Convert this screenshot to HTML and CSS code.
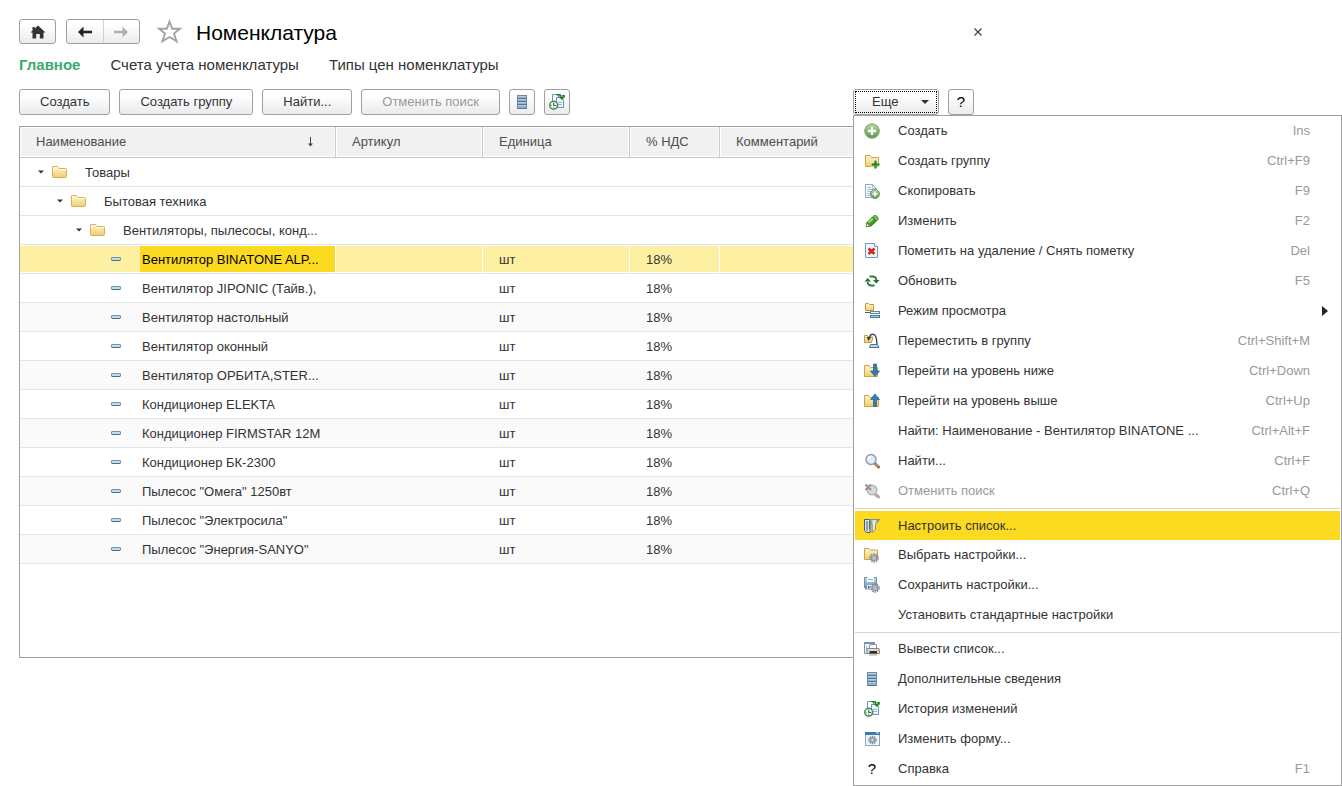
FILE: index.html
```html
<!DOCTYPE html>
<html lang="ru">
<head>
<meta charset="utf-8">
<title>Номенклатура</title>
<link rel="stylesheet" href="styles.css">
</head>
<body>
<svg class="sprite" aria-hidden="true">
  <defs>
    <linearGradient id="g-folder" x1="0" y1="0" x2="0" y2="1"><stop offset="0" stop-color="#fdf6cf"/><stop offset="1" stop-color="#efcf6c"/></linearGradient>
    <linearGradient id="g-green" x1="0" y1="0" x2="0" y2="1"><stop offset="0" stop-color="#b4dba0"/><stop offset="1" stop-color="#559b49"/></linearGradient>
    <linearGradient id="g-blue" x1="0" y1="0" x2="0" y2="1"><stop offset="0" stop-color="#c9dce9"/><stop offset="1" stop-color="#5f8cad"/></linearGradient>
    <linearGradient id="g-metal" x1="0" y1="0" x2="1" y2="0"><stop offset="0" stop-color="#5c6670"/><stop offset=".5" stop-color="#f4f6f8"/><stop offset="1" stop-color="#56616b"/></linearGradient>
  </defs>
  <symbol id="i-folder" viewBox="0 0 16 16"><path d="M.5 12.500V3Q.5 2.500 1 2.500H5.500L7 4.500H13.500Q14.500 4.500 14.500 5.500V12.500Q14.500 13.500 13.500 13.500H1.500Q.5 13.500 .5 12.500Z" fill="url(#g-folder)" stroke="#d8ad5c"/><path d="M1.500 7V3.500H5L6.500 5.500H13.500" fill="none" stroke="#fffbe6"/></symbol>
  <symbol id="i-item" viewBox="0 0 16 16"><rect x="2.500" y="6.500" width="9" height="3" rx=".5" fill="#c4dcea" stroke="#6f95b0"/><path d="M3 9.500H11" stroke="#4b708c"/></symbol>
  <symbol id="i-add" viewBox="0 0 16 16"><circle cx="8" cy="8" r="7.300" fill="url(#g-green)" stroke="#8a9c85"/><path d="M8 4V12M4 8H12" stroke="#fff" stroke-width="2.400"/></symbol>
  <symbol id="i-gear" viewBox="0 0 10 10"><circle cx="5" cy="5" r="3.900" fill="none" stroke="#858a92" stroke-width="1.800" stroke-dasharray="1.500 .95"/><circle cx="5" cy="5" r="2.600" fill="#d7dade" stroke="#9297a0" stroke-width="1.400"/><circle cx="5" cy="5" r="1.100" fill="#fff" stroke="#7a8088" stroke-width=".6"/></symbol>
  <symbol id="i-addfolder" viewBox="0 0 16 16"><path d="M1.500 13V2.500H6L7.500 4.500H14.500V13.500H1.500Z" fill="url(#g-folder)" stroke="#d0a04c"/><path d="M11.500 7V16M7 11.500H16" stroke="#fff" stroke-width="3.600"/><path d="M11.500 7.500V15.500M7.500 11.500H15.500" stroke="#2f8c1e" stroke-width="2.400"/></symbol>
  <symbol id="i-copy" viewBox="0 0 16 16"><path d="M1.500 1.500H8.500L12.500 5.500V14.500H1.500Z" fill="#f4f8fc" stroke="#91a8c2"/><path d="M8.500 1.500V5.500H12.500M3.500 4.500H7M3.500 6.500H10M3.500 8.500H10M3.500 10.500H7M3.500 12.500H6" fill="none" stroke="#a3bbd5"/><circle cx="11" cy="11" r="4.500" fill="url(#g-green)" stroke="#78906e"/><path d="M11 8.500V13.500M8.500 11H13.500" stroke="#fff" stroke-width="1.600"/></symbol>
  <symbol id="i-edit" viewBox="0 0 16 16"><path d="M2.500 13.500L3 9.500L8.500 4L12.500 8L7 13Z" fill="#3fa01d" stroke="#286d14"/><path d="M4.500 9.500L9 5.500" stroke="#9bdc76" stroke-width="1.800"/><path d="M8.500 4L10.500 2.500H12L14 4.500V6.500L12.500 8Z" fill="#79bd55" stroke="#286d14" stroke-width=".8"/><path d="M2 14L3 10L6 13Z" fill="#f1e3bd" stroke="#51604a" stroke-width=".6"/></symbol>
  <symbol id="i-delete" viewBox="0 0 16 16"><path d="M1.500 .5H10.500L13.500 3.500V14.500H1.500Z" fill="#f0f6fc" stroke="#7898b9"/><path d="M10.500 .5V3.500H13.500" fill="#fff" stroke="#7898b9"/><path d="M4.500 5.500L10.500 11M10.500 5.500L4.500 11" stroke="#d2231a" stroke-width="2.500"/></symbol>
  <symbol id="i-refresh" viewBox="0 0 16 16"><path d="M5.500 3.500H8.500Q12 3.500 12.500 7M10.500 12.500H7.500Q4 12.500 3.500 9" fill="none" stroke="#24803a" stroke-width="1.800"/><path d="M9 7H15.500L12.300 10.500ZM.5 8.500H7L3.700 5Z" fill="#24702f"/></symbol>
  <symbol id="i-view" viewBox="0 0 16 16"><path d="M1.500 7.500V.5H4.500L5.500 1.500H9.500V7.500Z" fill="url(#g-folder)" stroke="#c79a3b"/><path d="M1 9.500H6" stroke="#336b97"/><rect x="6.500" y="8.500" width="9" height="2" fill="#e8f1f7" stroke="#5b86a6"/><rect x="6.500" y="12.500" width="9" height="2" fill="#b3cde0" stroke="#4a7799"/></symbol>
  <symbol id="i-move" viewBox="0 0 16 16"><path d="M.5 9.500V2.500H3.500L4.500 4H9L7.500 9.500H.5Z" fill="url(#g-folder)" stroke="#c79a3b"/><path d="M5 5.500Q6 1 9 1.200Q12.500 1.200 13 11" fill="none" stroke="#30495e" stroke-width="1.400"/><path d="M2.500 4H7.500L4.500 8Z" fill="#30495e"/><path d="M6.500 11.500H13.500L15 14.500H5.500Z" fill="#bfd6e6" stroke="#4a7799"/></symbol>
  <symbol id="i-down" viewBox="0 0 16 16"><path d="M.5 13.500V2.500H5L6.500 4.500H13.500V13.500Z" fill="url(#g-folder)" stroke="#d0a04c"/><path d="M9.500 1H12.500V8H15.500L11 13.500L6.500 8H9.500Z" fill="#347db5" stroke="#1f5f92" stroke-width=".7"/></symbol>
  <symbol id="i-up" viewBox="0 0 16 16"><path d="M.5 13.500V2.500H5L6.500 4.500H14.500V13.500Z" fill="url(#g-folder)" stroke="#d0a04c"/><path d="M9.500 13.500H12.500V6.500H15.500L11 1L6.500 6.500H9.500Z" fill="#347db5" stroke="#1f5f92" stroke-width=".7"/></symbol>
  <symbol id="i-find" viewBox="0 0 16 16"><path d="M11 10.500L14.500 14" stroke="#996c4d" stroke-width="3" stroke-linecap="round"/><path d="M11.500 11L14 13.300" stroke="#e0bd9f"/><circle cx="7" cy="6.500" r="5" fill="#dbeefa" stroke="#8d98ac" stroke-width="1.400"/><path d="M4 6Q4.500 3.500 7 3.500" fill="none" stroke="#fff" stroke-width="1.500"/></symbol>
  <symbol id="i-unfind" viewBox="0 0 16 16"><path d="M11 11L14.500 14" stroke="#b5a8a2" stroke-width="3" stroke-linecap="round"/><circle cx="8" cy="7" r="4.800" fill="#d5d9df" stroke="#b0b4bd" stroke-width="1.400"/><path d="M1.500 1.500L7 7M7 1.500L1.500 7" stroke="#a58c8c" stroke-width="2"/></symbol>
  <symbol id="i-setup" viewBox="0 0 16 16"><path d="M.5 1.500H6V14.500H2.500L.5 12.500Z" fill="#dfe8ef" stroke="#48586a"/><path d="M3 3V13M5.500 3V11" stroke="#4c6f8e" stroke-width="1.200"/><path d="M5 1.500H15.500L11.500 6.500V11.500L8 14.500V6.500Z" fill="url(#g-metal)" stroke="#7b858e" stroke-width=".9"/></symbol>
  <symbol id="i-pick" viewBox="0 0 16 16"><path d="M.5 12.500V1.500H5L6.500 3H13.500V12.500Z" fill="url(#g-folder)" stroke="#d0a04c"/><use href="#i-gear" x="5" y="6" width="10" height="10"/></symbol>
  <symbol id="i-save" viewBox="0 0 16 16"><path d="M.5 .5H12.500V12H2L.5 10.500Z" fill="url(#g-blue)" stroke="#6790af"/><rect x="3" y="0" width="7" height="5" fill="#f5fafd"/><path d="M4 2.500H9" stroke="#98b8ce"/><rect x="3" y="8" width="6" height="4" fill="#e6edf2"/><rect x="4" y="9" width="1.500" height="2.500" fill="#42637c"/><use href="#i-gear" x="6" y="6" width="10" height="10"/></symbol>
  <symbol id="i-print" viewBox="0 0 16 16"><path d="M.5 1.500H10.500V12.500H.5Z" fill="#edf4fa" stroke="#7198b9"/><path d="M0 2H11" stroke="#6d96b9" stroke-width="2"/><path d="M2.500 5V11" stroke="#a9c4da"/><path d="M6 3.500H12.500V7.500H5Z" fill="#fff" stroke="#8d9297"/><path d="M3 7.500H15Q15.800 9 15.500 12.500H3Z" fill="#dedad2" stroke="#88847d" stroke-width=".9"/><path d="M5.500 10H13V12.500H5.500Z" fill="#2f302f"/><path d="M5 14H13" stroke="#d2cabf" stroke-width="1.800"/><path d="M14 9V10" stroke="#c46b3f"/></symbol>
  <symbol id="i-list" viewBox="0 0 16 16"><rect x="3.500" y="1.500" width="9" height="13" fill="#93b1c8" stroke="#6c8ea8"/><path d="M3 4.500H13M3 7.500H13M3 10.500H13M3 14.500H13" stroke="#54789a"/><path d="M4 2.500H12M4 5.500H12M4 8.500H12M4 11.500H12" stroke="#b7cddd"/></symbol>
  <symbol id="i-history" viewBox="0 0 16 16"><path d="M3.500 .5H9.500V9.500H3.500Z" fill="#fff" stroke="#7593c6"/><path d="M7.500 3.500H12L14.500 6V13.500H7.500Z" fill="#eff5ff" stroke="#718fbf"/><path d="M9 8.500H13M9 10.500H13" stroke="#9bb2d8"/><path d="M7.500 .8H11L12 2.500" fill="none" stroke="#158312" stroke-width="1.600"/><path d="M9.500 2.500H15.800L13 6Z M12.500 1H15.800V4Z" fill="#158312"/><circle cx="4.700" cy="11.200" r="3.900" fill="#fff" stroke="#43905a" stroke-width="1.600"/><path d="M4.700 8.500V11.500H7.300" fill="none" stroke="#2f7845" stroke-width="1.200"/><path d="M4.700 13V14M2 11.300H3" stroke="#df5830"/></symbol>
  <symbol id="i-form" viewBox="0 0 16 16"><rect x="1.500" y="1.500" width="14" height="13" fill="#eff6fa" stroke="#86a9c1"/><path d="M1 2.500H16" stroke="#3d7aaa" stroke-width="3"/><path d="M12 2H15" stroke="#d7e9f4"/><use href="#i-gear" x="4" y="4" width="9" height="10"/></symbol>
  <symbol id="i-home" viewBox="0 0 16 16"><path d="M8 1.500L15.500 8.500H13.500V14.500H9.800V10H6.200V14.500H2.500V8.500H.5L2.500 6.500V3H4.800V4.500Z" fill="#333"/></symbol>
  <symbol id="i-arrow" viewBox="0 0 16 16"><path d="M1 8L6.500 2.500V6.700H15V9.300H6.500V13.500Z" fill="currentColor"/></symbol>
  <symbol id="i-star" viewBox="0 0 24 24"><path d="M12 2.500L14.600 9.300H22L16.300 14L18.800 21.500L12 17.300L5.200 21.500L7.700 14L2 9.300H9.400Z" fill="#fff" stroke="#a3a3a3" stroke-width="1.800"/></symbol>
  <symbol id="i-tri" viewBox="0 0 8 8"><path d="M0 2H8L4 6Z" fill="currentColor"/></symbol>
  <symbol id="i-close" viewBox="0 0 8 8"><path d="M.5 .5L7.500 7.500M7.500 .5L.5 7.500" stroke="#444" stroke-width="1.300"/></symbol>
  <symbol id="i-sort" viewBox="0 0 8 12"><path d="M4.500 1V9" stroke="#444"/><path d="M2 7.500H7L4.500 10.500Z" fill="#444"/></symbol>
  <symbol id="i-sub" viewBox="0 0 6 10"><path d="M0 0V10L6 5Z" fill="#222"/></symbol>
</svg>

<main class="page">
  <header class="title-row">
    <button class="btn nav-btn" aria-label="Начальная страница"><svg class="icon"><use href="#i-home"/></svg></button>
    <div class="history">
      <button class="history-btn" aria-label="Назад"><svg class="icon"><use href="#i-arrow"/></svg></button>
      <button class="history-btn forward" aria-label="Вперед" disabled><svg class="icon"><use href="#i-arrow"/></svg></button>
    </div>
    <button class="plain star" aria-label="В избранное"><svg><use href="#i-star"/></svg></button>
    <h1>Номенклатура</h1>
    <button class="plain close" aria-label="Закрыть"><svg><use href="#i-close"/></svg></button>
  </header>

  <nav class="tabs">
    <a class="active" href="#">Главное</a>
    <a href="#">Счета учета номенклатуры</a>
    <a href="#">Типы цен номенклатуры</a>
  </nav>

  <div class="toolbar">
    <button class="btn">Создать</button>
    <button class="btn">Создать группу</button>
    <button class="btn">Найти...</button>
    <button class="btn" disabled>Отменить поиск</button>
    <button class="btn square" aria-label="Дополнительные сведения"><svg class="icon"><use href="#i-list"/></svg></button>
    <button class="btn square" aria-label="История изменений"><svg class="icon"><use href="#i-history"/></svg></button>
    <div class="more">
      <button class="btn more-btn" aria-haspopup="menu" aria-expanded="true">Еще<svg class="tri"><use href="#i-tri"/></svg></button>
      <div class="menu" role="menu">
        <button class="mi" role="menuitem"><svg class="icon"><use href="#i-add"/></svg><span>Создать</span><kbd>Ins</kbd></button>
        <button class="mi" role="menuitem"><svg class="icon"><use href="#i-addfolder"/></svg><span>Создать группу</span><kbd>Ctrl+F9</kbd></button>
        <button class="mi" role="menuitem"><svg class="icon"><use href="#i-copy"/></svg><span>Скопировать</span><kbd>F9</kbd></button>
        <button class="mi" role="menuitem"><svg class="icon"><use href="#i-edit"/></svg><span>Изменить</span><kbd>F2</kbd></button>
        <button class="mi" role="menuitem"><svg class="icon"><use href="#i-delete"/></svg><span>Пометить на удаление / Снять пометку</span><kbd>Del</kbd></button>
        <button class="mi" role="menuitem"><svg class="icon"><use href="#i-refresh"/></svg><span>Обновить</span><kbd>F5</kbd></button>
        <button class="mi" role="menuitem" aria-haspopup="menu"><svg class="icon"><use href="#i-view"/></svg><span>Режим просмотра</span><svg class="sub"><use href="#i-sub"/></svg></button>
        <button class="mi" role="menuitem"><svg class="icon"><use href="#i-move"/></svg><span>Переместить в группу</span><kbd>Ctrl+Shift+M</kbd></button>
        <button class="mi" role="menuitem"><svg class="icon"><use href="#i-down"/></svg><span>Перейти на уровень ниже</span><kbd>Ctrl+Down</kbd></button>
        <button class="mi" role="menuitem"><svg class="icon"><use href="#i-up"/></svg><span>Перейти на уровень выше</span><kbd>Ctrl+Up</kbd></button>
        <button class="mi" role="menuitem"><i class="icon"></i><span>Найти: Наименование - Вентилятор BINATONE ...</span><kbd>Ctrl+Alt+F</kbd></button>
        <button class="mi" role="menuitem"><svg class="icon"><use href="#i-find"/></svg><span>Найти...</span><kbd>Ctrl+F</kbd></button>
        <button class="mi" role="menuitem" disabled><svg class="icon"><use href="#i-unfind"/></svg><span>Отменить поиск</span><kbd>Ctrl+Q</kbd></button>
        <hr>
        <button class="mi current" role="menuitem"><svg class="icon"><use href="#i-setup"/></svg><span>Настроить список...</span></button>
        <button class="mi" role="menuitem"><svg class="icon"><use href="#i-pick"/></svg><span>Выбрать настройки...</span></button>
        <button class="mi" role="menuitem"><svg class="icon"><use href="#i-save"/></svg><span>Сохранить настройки...</span></button>
        <button class="mi" role="menuitem"><i class="icon"></i><span>Установить стандартные настройки</span></button>
        <hr>
        <button class="mi" role="menuitem"><svg class="icon"><use href="#i-print"/></svg><span>Вывести список...</span></button>
        <button class="mi" role="menuitem"><svg class="icon"><use href="#i-list"/></svg><span>Дополнительные сведения</span></button>
        <button class="mi" role="menuitem"><svg class="icon"><use href="#i-history"/></svg><span>История изменений</span></button>
        <button class="mi" role="menuitem"><svg class="icon"><use href="#i-form"/></svg><span>Изменить форму...</span></button>
        <button class="mi" role="menuitem"><i class="icon question">?</i><span>Справка</span><kbd>F1</kbd></button>
      </div>
    </div>
    <button class="btn square question" aria-label="Справка">?</button>
  </div>

  <div class="list">
    <table>
      <colgroup><col class="c-name"><col class="c-art"><col class="c-unit"><col class="c-vat"><col></colgroup>
      <thead>
        <tr><th><div class="sorted">Наименование<svg><use href="#i-sort"/></svg></div></th><th>Артикул</th><th>Единица</th><th>% НДС</th><th>Комментарий</th></tr>
      </thead>
      <tbody>
        <tr class="group"><td colspan="5"><div class="node"><svg class="tri"><use href="#i-tri"/></svg><svg class="icon"><use href="#i-folder"/></svg><span>Товары</span></div></td></tr>
        <tr class="group"><td colspan="5"><div class="node level-1"><svg class="tri"><use href="#i-tri"/></svg><svg class="icon"><use href="#i-folder"/></svg><span>Бытовая техника</span></div></td></tr>
        <tr class="group"><td colspan="5"><div class="node level-2"><svg class="tri"><use href="#i-tri"/></svg><svg class="icon"><use href="#i-folder"/></svg><span>Вентиляторы, пылесосы, конд...</span></div></td></tr>
        <tr class="selected"><td><div class="node level-3"><i class="tri"></i><svg class="icon"><use href="#i-item"/></svg><span>Вентилятор BINATONE ALP...</span></div></td><td></td><td>шт</td><td>18%</td><td></td></tr>
        <tr><td><div class="node level-3"><i class="tri"></i><svg class="icon"><use href="#i-item"/></svg><span>Вентилятор JIPONIC (Тайв.),</span></div></td><td></td><td>шт</td><td>18%</td><td></td></tr>
        <tr><td><div class="node level-3"><i class="tri"></i><svg class="icon"><use href="#i-item"/></svg><span>Вентилятор настольный</span></div></td><td></td><td>шт</td><td>18%</td><td></td></tr>
        <tr><td><div class="node level-3"><i class="tri"></i><svg class="icon"><use href="#i-item"/></svg><span>Вентилятор оконный</span></div></td><td></td><td>шт</td><td>18%</td><td></td></tr>
        <tr><td><div class="node level-3"><i class="tri"></i><svg class="icon"><use href="#i-item"/></svg><span>Вентилятор ОРБИТА,STER...</span></div></td><td></td><td>шт</td><td>18%</td><td></td></tr>
        <tr><td><div class="node level-3"><i class="tri"></i><svg class="icon"><use href="#i-item"/></svg><span>Кондиционер ELEKTA</span></div></td><td></td><td>шт</td><td>18%</td><td></td></tr>
        <tr><td><div class="node level-3"><i class="tri"></i><svg class="icon"><use href="#i-item"/></svg><span>Кондиционер FIRMSTAR 12М</span></div></td><td></td><td>шт</td><td>18%</td><td></td></tr>
        <tr><td><div class="node level-3"><i class="tri"></i><svg class="icon"><use href="#i-item"/></svg><span>Кондиционер БК-2300</span></div></td><td></td><td>шт</td><td>18%</td><td></td></tr>
        <tr><td><div class="node level-3"><i class="tri"></i><svg class="icon"><use href="#i-item"/></svg><span>Пылесос "Омега" 1250вт</span></div></td><td></td><td>шт</td><td>18%</td><td></td></tr>
        <tr><td><div class="node level-3"><i class="tri"></i><svg class="icon"><use href="#i-item"/></svg><span>Пылесос "Электросила"</span></div></td><td></td><td>шт</td><td>18%</td><td></td></tr>
        <tr><td><div class="node level-3"><i class="tri"></i><svg class="icon"><use href="#i-item"/></svg><span>Пылесос "Энергия-SANYO"</span></div></td><td></td><td>шт</td><td>18%</td><td></td></tr>
      </tbody>
    </table>
  </div>
</main>
</body>
</html>
```
FILE: styles.css
```css
* { box-sizing: border-box; }

body {
  margin: 0;
  background: #fff;
  color: #333;
  font: 13px/16px "Liberation Sans", Arial, sans-serif;
}

button {
  margin: 0;
  font: inherit;
  color: inherit;
  cursor: pointer;
}

.sprite {
  position: absolute;
  width: 0;
  height: 0;
}

.icon {
  display: block;
  flex: none;
  width: 16px;
  height: 16px;
}

.page {
  display: flex;
  flex-direction: column;
  min-height: 100vh;
  padding: 19px 352px 128px 19px;
}

/* Buttons */
.btn,
.history {
  border: 1px solid #a0a0a0;
  border-radius: 3px;
  background: linear-gradient(#fff 20%, #ebebeb);
}

.btn {
  display: flex;
  align-items: center;
  justify-content: center;
  height: 26px;
  padding: 0 20px;
  white-space: nowrap;
}

.btn:disabled { color: #999; }

.plain {
  display: flex;
  align-items: center;
  justify-content: center;
  padding: 0;
  border: 0;
  background: none;
}

/* Title */
.title-row {
  display: flex;
  align-items: center;
  height: 25px;
}

.nav-btn {
  width: 37px;
  height: 25px;
  padding: 0;
}

.history {
  display: flex;
  width: 74px;
  height: 25px;
  margin-left: 10px;
}

.history-btn {
  display: flex;
  flex: 1;
  align-items: center;
  justify-content: center;
  padding: 0;
  border: 0;
  background: none;
  color: #222;
}

.forward {
  border-left: 1px solid #d0d0d0;
  color: #b0b0b0;
}

.forward .icon { transform: scaleX(-1); }

.star { margin-left: 17px; }

.star svg {
  width: 25px;
  height: 25px;
}

h1 {
  margin: 2px 0 0 14px;
  color: #000;
  font-size: 21px;
  font-weight: normal;
  line-height: 24px;
}

.close {
  width: 24px;
  height: 24px;
  margin-left: auto;
}

.close svg {
  width: 8px;
  height: 8px;
}

/* Section links */
.tabs {
  display: flex;
  gap: 30px;
  margin-top: 12px;
  font-size: 15px;
  line-height: 18px;
}

.tabs a {
  color: #333;
  text-decoration: none;
}

.tabs .active {
  color: #3aaa6e;
  font-weight: bold;
}

/* Command bar */
.toolbar {
  display: flex;
  gap: 9px;
  margin: 15px 16px 0 0;
}

.square {
  width: 26px;
  padding: 0;
}

.question {
  color: #000;
  font-size: 15px;
  font-style: normal;
  text-align: center;
}

.more {
  position: relative;
  margin-left: auto;
}

.more-btn {
  justify-content: space-between;
  width: 86px;
  padding: 0 9px 0 18px;
  outline: 1px dotted #000;
  outline-offset: -3px;
}

.more-btn .tri {
  width: 8px;
  height: 8px;
}

/* Drop-down menu */
.menu {
  position: absolute;
  z-index: 1;
  top: 100%;
  left: 0;
  width: 489px;
  padding: 0 1px 1px;
  border: 1px solid #a0a0a0;
  background: #fff;
}

.mi {
  display: flex;
  align-items: center;
  width: 100%;
  height: 30px;
  padding: 0 30px 0 9px;
  border: 0;
  background: none;
  text-align: left;
}

.mi span {
  flex: 1;
  margin-left: 18px;
}

.mi kbd {
  color: #999;
  font: inherit;
}

.mi:disabled { color: #999; }

.mi.current {
  border-top: 1px solid #fff;
  background: #fbda20;
}

.sub {
  width: 6px;
  height: 10px;
  margin-right: -18px;
}

.menu hr {
  margin: 2px 0 1px;
  border: 0;
  border-top: 1px solid #d9d5c2;
}

/* List */
.list {
  flex: 1;
  margin: 11px 16px 0 0;
  border: 1px solid #a0a0a0;
}

table {
  width: 100%;
  border-spacing: 0;
  table-layout: fixed;
}

.c-name { width: 316px; }
.c-art,
.c-unit { width: 147px; }
.c-vat { width: 90px; }

th {
  height: 31px;
  padding: 0 16px;
  border-right: 1px solid #c8c8c8;
  border-bottom: 1px solid #c8c8c8;
  background: #f1f1f1;
  box-shadow: inset 0 0 0 1px #fff;
  color: #4d4d4d;
  font-weight: normal;
  text-align: left;
}

.sorted {
  display: flex;
  align-items: center;
  justify-content: space-between;
}

.sorted svg {
  width: 8px;
  height: 12px;
  margin-right: 5px;
}

td {
  height: 29px;
  padding: 2px 16px 0;
  border-bottom: 1px solid #e4e4e4;
}

td:first-child { padding: 0; }

tbody tr:nth-child(even) td { background: #fafafa; }

tbody tr.group td { background: #fff; }

tbody tr.selected td {
  border-right: 1px solid #fff;
  background: #fdf0a2;
  box-shadow: inset 0 1px #fff, inset 0 -1px #fff;
}

.node {
  display: flex;
  align-items: center;
  height: 26px;
  padding-left: 18px;
}

.level-1 { padding-left: 37px; }
.level-2 { padding-left: 56px; }
.level-3 { padding-left: 75px; }

.node .tri {
  width: 6px;
  height: 6px;
  margin-right: 8px;
}

.node span {
  flex: 1;
  height: 26px;
  margin-left: 15px;
  padding-left: 2px;
  line-height: 28px;
  white-space: nowrap;
}

.selected span {
  background: #fbda20;
  color: #000;
}
```
